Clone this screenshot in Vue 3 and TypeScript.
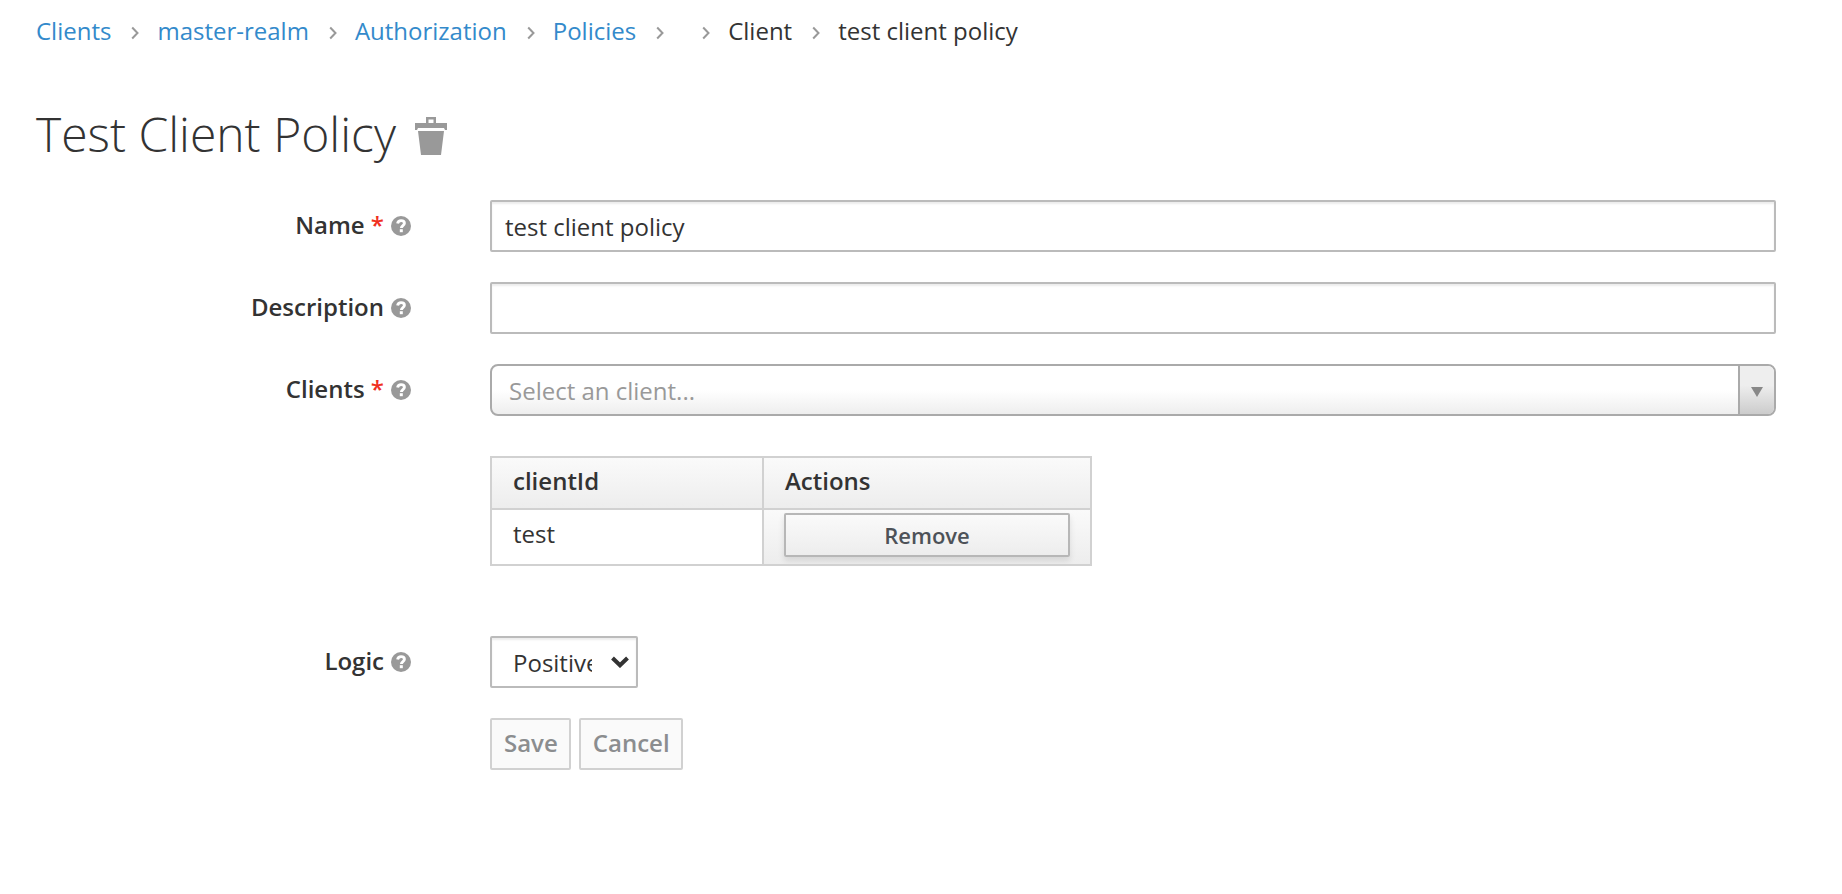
<script setup lang="ts">
import { ref } from 'vue'

interface Crumb {
  label: string
  link: boolean
}

interface ClientRow {
  clientId: string
}

const crumbs: Crumb[] = [
  { label: 'Clients', link: true },
  { label: 'master-realm', link: true },
  { label: 'Authorization', link: true },
  { label: 'Policies', link: true },
  { label: '', link: false },
  { label: 'Client', link: false },
  { label: 'test client policy', link: false },
]

const name = ref('test client policy')
const description = ref('')
const client = ref('')
const logic = ref('POSITIVE')
const selected = ref<ClientRow[]>([{ clientId: 'test' }])

function removeClient(row: ClientRow) {
  selected.value = selected.value.filter((r) => r !== row)
}
</script>

<template>
  <main class="page">
    <svg class="defs" aria-hidden="true">
      <symbol id="help" viewBox="0 0 20 20">
        <circle cx="10" cy="10" r="10" fill="#999" />
        <path
          d="M6.600 7.400C7 5.300 8.300 4.600 10.100 4.600c2 0 3.300 1.200 3.300 2.700 0 2.300-3 2.300-3 4.600"
          fill="none"
          stroke="#fff"
          stroke-width="2.900"
        />
        <rect x="8.800" y="13.200" width="3" height="3" fill="#fff" />
      </symbol>
    </svg>

    <nav aria-label="Breadcrumb">
      <ol class="breadcrumb">
        <li v-for="(crumb, i) in crumbs" :key="i">
          <svg v-if="i > 0" class="angle" viewBox="0 0 8 14" aria-hidden="true">
            <path d="M1.200 1.500 6.500 7 1.200 12.500" fill="none" stroke="#999" stroke-width="2" />
          </svg>
          <a v-if="crumb.link" href="#">{{ crumb.label }}</a>
          <span v-else>{{ crumb.label }}</span>
        </li>
      </ol>
    </nav>

    <header class="heading">
      <h1>Test Client Policy</h1>
      <button type="button" class="trash" aria-label="Delete policy">
        <svg viewBox="0 0 32 38" aria-hidden="true">
          <path
            d="M11 0h10v6h11v7h-2l-1-2H3l-1 2H0V6h11zM13.500 2.500V6h5V2.500z"
            fill="#999"
            fill-rule="evenodd"
          />
          <path d="M3 14h26l-3 24H6z" fill="#999" />
        </svg>
      </button>
    </header>

    <form class="form" @submit.prevent>
      <div class="row">
        <label for="name">Name <span class="required">*</span><svg class="help"><use href="#help" /></svg></label>
        <input id="name" v-model="name" class="control" type="text" />
      </div>

      <div class="row">
        <label for="description">Description<svg class="help"><use href="#help" /></svg></label>
        <input id="description" v-model="description" class="control" type="text" />
      </div>

      <div class="row">
        <label for="clients">Clients <span class="required">*</span><svg class="help"><use href="#help" /></svg></label>
        <div class="combo">
          <select id="clients" v-model="client">
            <option value="">Select an client...</option>
          </select>
          <span class="combo-arrow">
            <svg viewBox="0 0 12 10" aria-hidden="true"><path d="M0 0h12L6 10z" fill="#888" /></svg>
          </span>
        </div>
      </div>

      <div class="row table-row">
        <table class="clients">
          <thead>
            <tr>
              <th class="col-id">clientId</th>
              <th>Actions</th>
            </tr>
          </thead>
          <tbody>
            <tr v-for="row in selected" :key="row.clientId">
              <td>{{ row.clientId }}</td>
              <td class="actions">
                <button type="button" class="remove" @click="removeClient(row)">Remove</button>
              </td>
            </tr>
          </tbody>
        </table>
      </div>

      <div class="row">
        <label for="logic">Logic<svg class="help"><use href="#help" /></svg></label>
        <div class="logic">
          <select id="logic" v-model="logic" class="control">
            <option value="POSITIVE">Positive</option>
            <option value="NEGATIVE">Negative</option>
          </select>
          <svg class="caret" viewBox="0 0 18 12" aria-hidden="true">
            <path d="M1.500 2 9 9.300 16.500 2" fill="none" stroke="#333" stroke-width="4" />
          </svg>
        </div>
      </div>

      <div class="row">
        <div class="buttons">
          <button type="submit" class="btn" disabled>Save</button>
          <button type="button" class="btn" disabled>Cancel</button>
        </div>
      </div>
    </form>
  </main>
</template>

<style>
body {
  margin: 0;
  background: #fff;
}
</style>

<style scoped>
.page,
.page * {
  box-sizing: border-box;
}

.page {
  padding: 11px 66px 0 36px;
  font-family: 'Open Sans', 'Noto Sans', sans-serif;
  font-size: 24px;
  line-height: 40px;
  color: #333;
}

.page button,
.page input,
.page select {
  font: inherit;
  color: inherit;
}

.defs {
  position: absolute;
  width: 0;
  height: 0;
}

.breadcrumb {
  display: flex;
  margin: 0;
  padding: 0;
  list-style: none;
}

.breadcrumb li {
  display: flex;
  align-items: center;
}

.breadcrumb a {
  color: #338acb;
  text-decoration: none;
}

.angle {
  width: 8px;
  height: 14px;
  margin: 4px 18px 0 20px;
}

.heading {
  display: flex;
  align-items: center;
  gap: 19px;
  margin-top: 50px;
}

h1 {
  margin: 0;
  font-size: 48px;
  font-weight: 300;
  line-height: 66px;
}

.trash {
  display: flex;
  margin-top: 4px;
  padding: 0;
  border: 0;
  background: none;
}

.trash svg {
  width: 32px;
  height: 38px;
}

.form {
  display: flex;
  flex-direction: column;
  gap: 30px;
  margin-top: 33px;
}

.row {
  display: grid;
  grid-template-columns: 375px 1fr;
  column-gap: 79px;
  align-items: start;
}

.row > :not(label) {
  grid-column: 2;
}

label {
  display: flex;
  justify-content: flex-end;
  align-items: center;
  padding-top: 5px;
  font-weight: 600;
  white-space: pre;
}

.required {
  color: #f0301e;
}

.help {
  width: 20px;
  height: 20px;
  margin: 1px 0 0 7px;
}

.control {
  width: 100%;
  height: 52px;
  padding: 0 13px;
  border: 2px solid #bbb;
  border-radius: 2px;
  background: #fff;
  box-shadow: inset 0 2px 2px rgba(3, 3, 3, 0.075);
  outline: none;
}

.combo {
  position: relative;
}

.page .combo select {
  display: block;
  width: 100%;
  height: 52px;
  padding: 2px 52px 0 17px;
  border: 2px solid #aaa;
  border-radius: 8px;
  background: linear-gradient(#fff 50%, #eee);
  color: #999;
  appearance: none;
  outline: none;
}

.combo-arrow {
  position: absolute;
  top: 2px;
  right: 2px;
  bottom: 2px;
  display: flex;
  align-items: center;
  justify-content: center;
  width: 36px;
  padding-top: 4px;
  border-left: 2px solid #aaa;
  border-radius: 0 6px 6px 0;
  background: linear-gradient(#eee 40%, #ccc);
  pointer-events: none;
}

.combo-arrow svg {
  width: 12px;
  height: 10px;
}

.table-row {
  margin: 10px 0 40px;
}

.clients {
  width: 602px;
  table-layout: fixed;
  border-collapse: collapse;
}

.clients th,
.clients td {
  padding: 0 20px 0 21px;
  border: 2px solid #d1d1d1;
  text-align: left;
}

.clients th {
  height: 52px;
  padding-bottom: 4px;
  font-weight: 600;
  background: linear-gradient(#fafafa, #ededed);
}

.clients td {
  height: 56px;
  padding-bottom: 7px;
}

.clients .col-id {
  width: 272px;
}

.clients .actions {
  padding: 3px 20px 0;
  vertical-align: top;
  background: linear-gradient(#fafafa, #ededed);
}

.page .remove {
  display: block;
  width: 100%;
  height: 44px;
  padding: 0;
  border: 2px solid #b7b7b7;
  border-radius: 2px;
  background: linear-gradient(#fafafa, #ededed);
  box-shadow: 0 4px 6px rgba(3, 3, 3, 0.1);
  color: #4d5258;
  font-size: 22px;
  font-weight: 600;
  line-height: 40px;
}

.logic {
  position: relative;
  width: 148px;
}

.logic select {
  display: block;
  padding: 2px 44px 0 21px;
  appearance: none;
}

.caret {
  position: absolute;
  top: 20px;
  right: 9px;
  width: 18px;
  height: 12px;
  pointer-events: none;
}

.buttons {
  display: flex;
  gap: 8px;
}

.page .btn {
  height: 52px;
  padding: 0 11px 2px 12px;
  border: 2px solid #d1d1d1;
  border-radius: 2px;
  background: #fafafa;
  color: #8b8d8f;
  font-weight: 600;
}
</style>
